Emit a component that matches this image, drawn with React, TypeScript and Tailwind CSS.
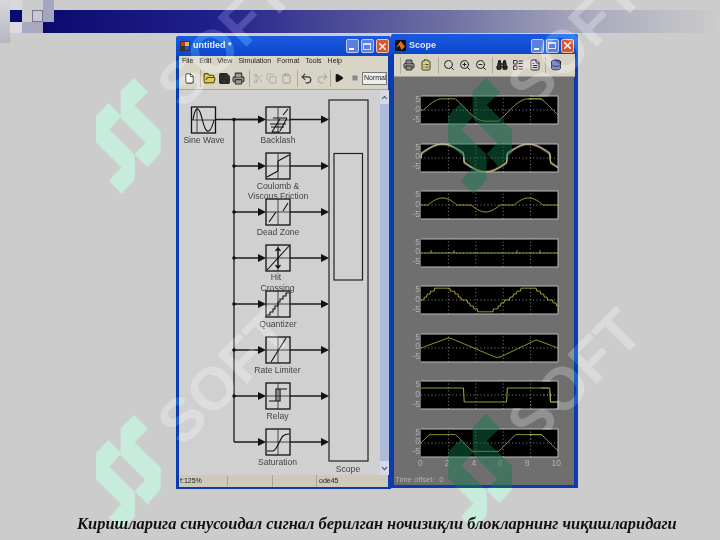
import React from "react";
import { File, FolderOpen, Save, Printer, Scissors, Copy, Clipboard, Undo2, Redo2, Play, Square, Search, ZoomIn, ZoomOut, Binoculars, FileText, ChevronUp, ChevronDown, X, LayoutList, ClipboardList, Database } from "lucide-react";

const LOGO_A = "114,0 156,42 116,82 194,158 194,223 154,268 116,228 148,195 74,121 74,40";
const LOGO_B = "38,75 76,115 41,155 116,230 116,305 76,347 38,308 76,268 0,193 0,113";

function Logo({ fill, className }: { fill: string; className: string }) {
  return (
    <svg viewBox="0 0 194 347" className={className}>
      <polygon points={LOGO_A} fill={fill} />
      <polygon points={LOGO_B} fill={fill} />
    </svg>
  );
}

function Soft({ className }: { className: string }) {
  return (
    <div className={`absolute w-[220px] h-[70px] -rotate-45 flex items-center justify-center text-[60px] font-bold text-white/60 mix-blend-soft-light font-['Liberation_Sans',sans-serif] ${className}`}>
      SOFT
    </div>
  );
}

function TitleButtons() {
  return (
    <div className="flex gap-[1.5px] items-center">
      <div className="w-[13.5px] h-[14px] rounded-[2px] bg-[#5b7fe0] border border-[#b8c8f0] flex items-end justify-start pl-[2px] pb-[2px]">
        <div className="w-[5px] h-[2px] bg-white" />
      </div>
      <div className="w-[13.5px] h-[14px] rounded-[2px] bg-[#5b7fe0] border border-[#b8c8f0] flex items-center justify-center">
        <div className="w-[8px] h-[7px] border border-[#d8e0ff] border-t-2" />
      </div>
      <div className="w-[13.5px] h-[14px] rounded-[2px] bg-[#d9572f] border border-[#f0c0a8] flex items-center justify-center">
        <X size={11} strokeWidth={3} color="#fff" />
      </div>
    </div>
  );
}

function Sep({ className = "" }: { className?: string }) {
  return <div className={`w-px h-[17px] bg-[#aeab9d] shrink-0 ${className}`} />;
}

function Block({ x, y, children }: { x: number; y: number; children: React.ReactNode }) {
  return (
    <g transform={`translate(${x},${y})`}>
      <rect x={-12} y={-13} width={24} height={26} fill="#d2d2d2" stroke="#111" strokeWidth={1.3} />
      <path d="M0 -13V13M-12 0H12" stroke="#222" strokeWidth={0.8} fill="none" />
      <g fill="none" stroke="#111" strokeWidth={1.1}>{children}</g>
    </g>
  );
}

const rows = [119.5, 166, 212, 258, 304, 350, 396, 442];

function Diagram() {
  return (
    <svg viewBox="179 90 200 385" className="w-[200px] h-[385px] shrink-0" fontFamily="'Liberation Sans', sans-serif">
      <g stroke="#1c1c1c" strokeWidth={1.3} fill="none">
        <path d="M216 119.5H260M234 119.5V442" />
        {rows.map((y) => (
          <path key={y} d={`M234 ${y}H260M290 ${y}H323`} />
        ))}
      </g>
      {rows.map((y, i) => (
        <g key={y} fill="#111">
          {i < 7 && <circle cx={234} cy={y} r={1.8} />}
          <polygon points={`258,${y - 4} 266,${y} 258,${y + 4}`} />
          <polygon points={`321,${y - 4} 329,${y} 321,${y + 4}`} />
        </g>
      ))}
      <rect x={191.5} y={107} width={24} height={26} fill="#d2d2d2" stroke="#111" strokeWidth={1.3} />
      <path d="M197 107V133M191.5 120H215.5" stroke="#222" strokeWidth={0.8} />
      <path d="M193 120C195 107 198 107 200 112C202 117 203 124 205 128C207 133 211 133 214 120" fill="none" stroke="#111" strokeWidth={1.1} />

      <Block x={278} y={120}>
        <path d="M-6 12L2 -1M2 11L9 -2M5 -5L10 -11M-8 4H8M-7 7H6M-5 -2H9M-6 12H2" />
      </Block>
      <Block x={278} y={166}>
        <path d="M-11 11L0 5M0 -5L11 -11M0 5V-5" />
      </Block>
      <Block x={278} y={212}>
        <path d="M-9 10L-2 0M5 -1L10 -9" />
      </Block>
      <Block x={278} y={258}>
        <path d="M-11 12L11 -12" />
        <path d="M0 -10V10M-2.5 -7L0 -10L2.5 -7M-2.5 7L0 10L2.5 7" strokeWidth={1.2} />
      </Block>
      <Block x={278} y={304}>
        <path d="M-11 11H-8V8H-5V5H-3V2H0V-2H2V-5H5V-8H8V-11H11" />
      </Block>
      <Block x={278} y={350}>
        <path d="M-7 12L8 -12" />
      </Block>
      <Block x={278} y={396}>
        <path d="M-9 5H2V-7H9M-2 5V-7H2" strokeWidth={1.2} />
      </Block>
      <Block x={278} y={442}>
        <path d="M-11 9H-5C-1 8 2 -3 5 -6C7 -8 9 -8 11 -8" />
      </Block>

      <rect x={329} y={100} width={39} height={361} fill="#d0d0d0" stroke="#222" strokeWidth={1.2} />
      <rect x={334} y={153.5} width={28.5} height={126.5} fill="#d0d0d0" stroke="#222" strokeWidth={1.2} />

      <g fill="#444" fontSize={8.6} textAnchor="middle">
        <text x={204} y={143}>Sine Wave</text>
        <text x={278} y={143}>Backlash</text>
        <text x={278} y={189}>Coulomb &amp;</text>
        <text x={278} y={199}>Viscous Friction</text>
        <text x={278} y={235}>Dead Zone</text>
        <text x={276} y={280}>Hit</text>
        <text x={277.5} y={291}>Crossing</text>
        <text x={278} y={327}>Quantizer</text>
        <text x={277.5} y={373}>Rate Limiter</text>
        <text x={277.5} y={419}>Relay</text>
        <text x={277.5} y={465}>Saturation</text>
        <text x={348} y={472}>Scope</text>
      </g>
    </svg>
  );
}

const ts = Array.from({ length: 201 }, (_, i) => i * 0.05);
const u = (t: number) => 5 * Math.sin(t);
function backlash(): number[] {
  let y = 0;
  return ts.map((t) => {
    const v = u(t);
    if (v > y + 1) y = v - 1;
    if (v < y - 1) y = v + 1;
    return y;
  });
}
const clamp = (v: number, a: number) => Math.max(-a, Math.min(a, v));
const rateKnots: [number, number][] = [[0, 0], [2, 3.6], [2.3, 3.2], [5.5, -3.4], [5.8, -3.2], [8.4, 2.9], [10, 0]];
function rate(t: number) {
  for (let i = 0; i < rateKnots.length - 1; i++) {
    const [a, b] = rateKnots[i];
    const [c, d] = rateKnots[i + 1];
    if (t <= c) return b + ((t - a) / (c - a)) * (d - b);
  }
  return 0;
}
const coul = (t: number, j: number, m: number) => Math.sign(Math.sin(t)) * j + (u(t) * m * (5 - j)) / 5;

type Trace = { c: string; v: number[] };
const YEL = "#bcbc38";
const plots: Trace[][] = [
  [{ c: YEL, v: backlash() }],
  [
    { c: "#6a6ae0", v: ts.map((t) => coul(t, 2, 1.02)) },
    { c: "#8a3030", v: ts.map((t) => coul(t, 0.9, 0.9)) },
    { c: "#40b060", v: ts.map((t) => coul(t, 1.7, 1)) },
    { c: "#d0d0d0", v: ts.map((t) => coul(t, 1.5, 1)) },
    { c: YEL, v: ts.map((t) => coul(t, 1.3, 0.98)) },
  ],
  [{ c: YEL, v: ts.map((t) => (Math.abs(u(t)) > 2.5 ? u(t) - Math.sign(u(t)) * 2.5 : 0)) }],
  [{ c: YEL, v: ts.map(() => 0) }],
  [{ c: YEL, v: ts.map((t) => Math.trunc(u(t) / 1.05) * 1.05) }],
  [{ c: YEL, v: ts.map(rate) }],
  [{ c: YEL, v: ts.map((t) => (Math.sin(t) >= 0 ? 2.5 : -2.5)) }],
  [{ c: YEL, v: ts.map((t) => clamp(u(t), 3)) }],
];

function Plot({ traces, ticks }: { traces: Trace[]; ticks?: boolean }) {
  return (
    <svg viewBox="0 0 137 28" className="w-[137px] h-[28px] block bg-black shrink-0 overflow-visible">
      <path d="M27.4 -1V30M54.8 -1V30M82.2 -1V30M109.6 -1V30M0 14H137" stroke="#a8a8a8" strokeWidth={0.8} strokeDasharray="1 2.5" fill="none" />
      {traces.map((tr) => (
        <polyline
          key={tr.c}
          fill="none"
          stroke={tr.c}
          strokeWidth={0.9}
          points={ts.map((t, i) => `${(t * 13.7).toFixed(1)},${(14 - (tr.v[i] * 14) / 5).toFixed(1)}`).join(" ")}
        />
      ))}
      {ticks && <path d="M10 14V11M33 14V11M96 14V11M119 14V11" stroke={YEL} strokeWidth={0.8} />}
      <path d="M0 0H137M0 28H137M137 0V28" stroke="#bcbcbc" strokeWidth={1} fill="none" />
    </svg>
  );
}

function SimulinkWindow() {
  return (
    <div className="w-[215px] h-[453px] mt-[2px] shrink-0 flex flex-col bg-[#0a3cb0] rounded-t-[3px] px-[3px] pb-[2px] font-['Liberation_Sans',sans-serif]">
      <div className="h-[20px] -mx-[3px] pl-[3px] pr-[2px] flex items-center justify-between bg-gradient-to-b from-[#1a5ae0] to-[#0c46cc] rounded-t-[3px] shrink-0">
        <div className="flex items-center gap-[3px] pl-[1px]">
          <svg viewBox="0 0 10 10" className="w-[10px] h-[10px]">
            <rect width="10" height="10" fill="#333" />
            <rect x="1" y="1" width="4" height="4" fill="#d03030" />
            <rect x="5" y="5" width="4" height="4" fill="#3050c0" />
            <rect x="5" y="1" width="4" height="4" fill="#e0c040" />
          </svg>
          <span className="text-[9px] font-bold text-[#e6ecff]">untitled *</span>
        </div>
        <TitleButtons />
      </div>
      <div className="h-[11px] bg-[#d8d5c6] flex items-center gap-[6px] pl-[3px] text-[7px] text-[#222] shrink-0">
        <span>File</span>
        <span>Edit</span>
        <span>View</span>
        <span>Simulation</span>
        <span>Format</span>
        <span>Tools</span>
        <span>Help</span>
      </div>
      <div className="h-[23px] bg-[#d8d5c6] border-b border-[#a8a69a] flex items-center pl-[5px] shrink-0">
        <File size={11} color="#111" fill="#fff" className="shrink-0" />
        <Sep className="ml-[5px]" />
        <FolderOpen size={13} color="#554a10" fill="#e4cc50" className="ml-[2px] shrink-0" />
        <Save size={13} color="#222" fill="#333" className="ml-[2px] shrink-0" />
        <Printer size={13} color="#333" fill="#999" className="ml-[1px] shrink-0" />
        <Sep className="ml-[4px]" />
        <Scissors size={11} color="#aaa" className="ml-[3px] shrink-0" />
        <Copy size={11} color="#aaa" className="ml-[2px] shrink-0" />
        <Clipboard size={11} color="#999" className="ml-[4px] shrink-0" />
        <Sep className="ml-[5px]" />
        <Undo2 size={13} color="#333" className="ml-[2px] shrink-0" />
        <Redo2 size={13} color="#aaa" className="ml-[3px] shrink-0" />
        <Sep className="ml-[1px]" />
        <Play size={10} color="#111" fill="#111" className="ml-[3px] shrink-0" />
        <Square size={6} color="#888" fill="#888" className="ml-[8px] shrink-0" />
        <div className="w-[25px] h-[13px] bg-[#eeeeea] border border-[#777] text-[7px] text-[#222] flex items-center pl-[1px] ml-[4px] overflow-hidden shrink-0">Normal</div>
      </div>
      <div className="h-[385px] bg-[#d0d0d0] flex shrink-0">
        <Diagram />
        <div className="w-[9px] ml-[1px] flex flex-col bg-[#aebcdc] shrink-0">
          <div className="h-[14px] bg-[#d6d8e4] flex items-center justify-center">
            <ChevronUp size={9} strokeWidth={3} color="#5a6a90" />
          </div>
          <div className="flex-1" />
          <div className="h-[14px] bg-[#d6d8e4] flex items-center justify-center">
            <ChevronDown size={9} strokeWidth={3} color="#34509a" />
          </div>
        </div>
      </div>
      <div className="h-[12px] bg-[#cfc9bc] flex items-center text-[7px] text-[#222] shrink-0">
        <div className="w-[49px] pl-[1px] border-r border-[#a8a59a]">f:125%</div>
        <div className="w-[45px] h-full border-r border-[#a8a59a]" />
        <div className="w-[44px] h-full border-r border-[#a8a59a]" />
        <div className="pl-[2px]">ode45</div>
      </div>
    </div>
  );
}

function ScopeWindow() {
  return (
    <div className="relative w-[187px] h-[454px] shrink-0 flex flex-col bg-[#0a3cb0] rounded-t-[3px] px-[3px] pb-[3px] overflow-hidden font-['Liberation_Sans',sans-serif]">
      <div className="h-[20px] -mx-[3px] pt-[3px] pl-[4px] pr-[4px] flex items-center justify-between bg-gradient-to-b from-[#1a5ae0] to-[#0c46cc] shrink-0">
        <div className="flex items-center gap-[3px]">
          <svg viewBox="0 0 10 10" className="w-[11px] h-[11px]">
            <rect width="10" height="10" fill="#111" />
            <path d="M1 7L5 1L9 6L6 9L4 5Z" fill="#e07020" />
          </svg>
          <span className="text-[9px] font-bold text-[#dce6ff]">Scope</span>
        </div>
        <TitleButtons />
      </div>
      <div className="h-[23px] bg-[#d6d3c4] flex items-center pl-[6px] shrink-0 border-b border-[#a5a397]">
        <Sep />
        <Printer size={12} color="#333" fill="#8a8a8a" className="ml-[2px] shrink-0" />
        <ClipboardList size={12} color="#443" fill="#d8d080" className="ml-[5px] shrink-0" />
        <Sep className="ml-[6px]" />
        <Search size={12} color="#222" className="ml-[4px] shrink-0" />
        <ZoomIn size={12} color="#222" className="ml-[4px] shrink-0" />
        <ZoomOut size={12} color="#222" className="ml-[4px] shrink-0" />
        <Sep className="ml-[5px]" />
        <Binoculars size={12} color="#111" fill="#333" className="ml-[3px] shrink-0" />
        <LayoutList size={12} color="#442244" fill="#ddd" className="ml-[4px] shrink-0" />
        <FileText size={12} color="#442244" fill="#ddd" className="ml-[5px] shrink-0" />
        <Sep className="ml-[4px]" />
        <Database size={12} color="#223" fill="#5868c0" className="ml-[4px] shrink-0" />
      </div>
      <div className="flex-1 bg-[#6f6f6f] mr-[1px] flex flex-col pt-[19px] text-[8.5px] text-[#b0b0b0] leading-none min-h-0">
        <div className="flex flex-col gap-[19.5px]">
          {plots.map((p, i) => (
            <div key={i} className="flex">
              <div className="w-[27px] h-[28px] pr-[1px] flex flex-col justify-between items-end -my-[1px]">
                <span>5</span>
                <span>0</span>
                <span>-5</span>
              </div>
              <Plot traces={p} ticks={i === 3} />
            </div>
          ))}
        </div>
        <div className="flex justify-between w-[143px] ml-[24px] mt-[2px]">
          <span>0</span>
          <span>2</span>
          <span>4</span>
          <span>6</span>
          <span>8</span>
          <span>10</span>
        </div>
        <div className="mt-[9px] pl-[1px] text-[7.5px] tracking-[0.1px]">Time offset:&nbsp;&nbsp;0</div>
      </div>
      <Logo fill="rgba(16,120,78,0.45)" className="absolute left-[56.7px] top-[44px] w-[64.7px] h-[115.7px]" />
      <Logo fill="rgba(16,120,78,0.45)" className="absolute left-[56.7px] top-[380px] w-[64.7px] h-[115.7px]" />
    </div>
  );
}

export default function App() {
  return (
    <div className="relative w-[720px] h-[540px] overflow-hidden bg-[#cccccc] blur-[0.5px]">
      <Logo fill="#c8ecdc" className="absolute left-[96.3px] top-[78px] w-[64.7px] h-[115.7px]" />
      <Logo fill="#c8ecdc" className="absolute left-[96.3px] top-[415px] w-[64.7px] h-[115.7px]" />
      <Logo fill="#c8ecdc" className="absolute left-[447.7px] top-[414px] w-[64.7px] h-[115.7px]" />

      <div className="relative flex flex-col">
        <div className="h-[23px] mt-[10px] ml-[43px] bg-[linear-gradient(90deg,#0b0b6e_0%,#20208a_25%,#7070a4_60%,#a8a8bc_80%,#cccccc_100%)]" />
        <div className="flex ml-[176px] mt-[1px] items-start">
          <SimulinkWindow />
          <ScopeWindow />
        </div>
        <div className="mt-[25px] ml-[77px] whitespace-nowrap text-[16.4px] leading-[20px] font-bold italic text-[#111] font-['Liberation_Serif',serif]">
          Киришларига синусоидал сигнал берилган ночизиқли блокларнинг чиқишларидаги
        </div>
      </div>

      <div className="absolute left-0 top-0 w-[10px] h-[43px] bg-gradient-to-b from-[#d8d8dc] to-[#b6b6c2]" />
      <div className="absolute left-[10px] top-0 w-[12px] h-[10px] bg-[#d8d8dc]" />
      <div className="absolute left-[10px] top-[22px] w-[12px] h-[11px] bg-[#dcdce0]" />
      <div className="absolute left-[22px] top-[22px] w-[21px] h-[11px] bg-[#a8a8c0]" />
      <div className="absolute left-[32px] top-[10px] w-[11px] h-[12px] bg-[#c8c8d4] border border-[#77778f]" />
      <div className="absolute left-[43px] top-0 w-[11px] h-[22px] bg-[#a5a5c2]" />
      <div className="absolute left-[10px] top-[10px] w-[12px] h-[12px] bg-[#0a0a6e]" />

      <Soft className="left-[115px] top-[342px]" />
      <Soft className="left-[115px] top-[5px]" />
      <Soft className="left-[465px] top-[342px]" />
      <Soft className="left-[465px] top-[5px]" />
    </div>
  );
}
